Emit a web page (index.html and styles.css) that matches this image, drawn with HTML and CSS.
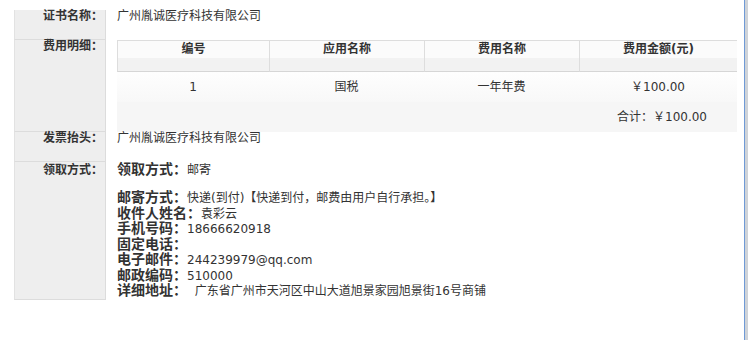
FILE: index.html
```html
<!DOCTYPE html>
<html>
<head>
  <meta charset="utf-8">
  <title>证书详情</title>
  <link rel="stylesheet" href="styles.css">
</head>
<body>
  <div class="cert">
    <div class="row row-name">
      <div class="label">证书名称：</div>
      <div class="value">广州胤诚医疗科技有限公司</div>
    </div>
    <div class="row">
      <div class="label">费用明细：</div>
      <div class="value">
        <!-- fee list, one line per item plus the total -->
        <table class="fees">
          <colgroup>
            <col class="c1"><col class="c2"><col class="c3"><col class="c4">
          </colgroup>
          <thead>
            <tr><th>编号</th><th>应用名称</th><th>费用名称</th><th>费用金额(元)</th></tr>
          </thead>
          <tbody>
            <tr class="item"><td>1</td><td>国税</td><td>一年年费</td><td>￥100.00</td></tr>
            <tr class="sum"><td colspan="4">合计：￥100.00</td></tr>
          </tbody>
        </table>
      </div>
    </div>
    <div class="row row-name">
      <div class="label">发票抬头：</div>
      <div class="value">广州胤诚医疗科技有限公司</div>
    </div>
    <div class="row">
      <div class="label label-post">领取方式：</div>
      <div class="value post">
        <div class="line first"><b>领取方式：</b>邮寄</div>
        <div class="line"><b>邮寄方式：</b>快递(到付)【快递到付，邮费由用户自行承担。】</div>
        <div class="line"><b>收件人姓名：</b>袁彩云</div>
        <div class="line"><b>手机号码：</b>18666620918</div>
        <div class="line"><b>固定电话：</b></div>
        <div class="line"><b>电子邮件：</b>244239979@qq.com</div>
        <div class="line"><b>邮政编码：</b>510000</div>
        <div class="line"><b>详细地址：</b>&nbsp;&nbsp;广东省广州市天河区中山大道旭景家园旭景街16号商铺</div>
      </div>
    </div>
  </div>
  <div class="edge"></div>
</body>
</html>
```

FILE: styles.css
```css
body {
  margin: 0;
  background: #fff;
  font: 12px "DejaVu Sans", "Noto Sans CJK SC", sans-serif;
  color: #333;
}

.cert {
  margin: 10px 0 0 14px;
  width: 730px;
}

.row {
  display: flex;
}

.label {
  flex: none;
  box-sizing: border-box;
  width: 92px;
  padding-right: 2px;
  background: #eeeeee;
  border-left: 1px solid #e2e2e2;
  border-right: 1px solid #dcdcdc;
  border-bottom: 1px solid #dcdcdc;
  text-align: right;
  font-weight: bold;
  line-height: 13px;
}
.label-post {
  padding-top: 2px;
}

.value {
  flex: 1;
  padding-left: 11px;
  line-height: 13px;
}
.row-name .value {
  padding-bottom: 17px;
}

/* fee table */
.fees {
  width: 620px;
  table-layout: fixed;
  border-collapse: separate;
  border-spacing: 0;
  text-align: center;
}
.fees .c1 { width: 152px; }
.fees .c2 { width: 155px; }
.fees .c3 { width: 155px; }
.fees .c4 { width: 158px; }

.fees th {
  padding: 2px 0 15px;
  line-height: 13px;
  vertical-align: top;
  border-top: 1px solid #dddddd;
  border-bottom: 1px solid #d6d6d6;
  border-left: 1px solid #dddddd;
  background: linear-gradient(#fbfbfb 0, #fbfbfb 17px, #f2f2f2 17px);
}
.fees td {
  padding: 8px 0;
  line-height: 14px;
  vertical-align: middle;
}
.fees .item td {
  background: linear-gradient(#fefefe, #f8f8f8);
}
.fees .sum td {
  text-align: right;
  padding-right: 30px;
  background: #f6f6f6;
}

/* delivery info */
.post {
  padding-bottom: 1px;
}
.post .line {
  height: 15.5px;
  line-height: 15.5px;
  white-space: nowrap;
}
.post .first {
  margin-bottom: 12.5px;
}
.post b {
  font-size: 14px;
  color: #333;
}

.edge {
  position: fixed;
  top: 0;
  right: 0;
  bottom: 0;
  width: 3px;
  border-left: 1px solid #6f9ad6;
  background: #cfd3d8;
}
```
